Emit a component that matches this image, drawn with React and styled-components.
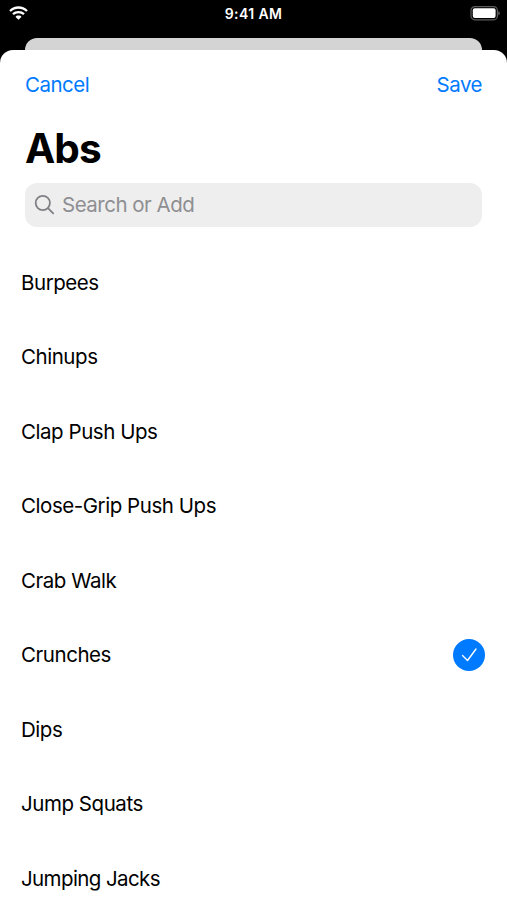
import React from "react";
import styled, { createGlobalStyle } from "styled-components";

const GlobalStyle = createGlobalStyle`
    * {
        box-sizing: border-box;
    }

    body {
        margin: 0;
        background: #000;
        font-family: Inter, "Liberation Sans", sans-serif;
        overflow: hidden;
    }
`;

const Screen = styled.div`
    width: 507px;
    height: 900px;
    display: flex;
    flex-direction: column;
    background: #000;
    overflow: hidden;
`;

const StatusBar = styled.header`
    height: 38px;
    flex-shrink: 0;
    display: grid;
    grid-template-columns: 1fr auto 1fr;
    align-items: start;
    padding: 6px 7px 0 9px;
    color: #fff;
`;

const Time = styled.span`
    margin-left: -2px;
    font-size: 14px;
    font-weight: 600;
    line-height: 16px;
    letter-spacing: 0.4px;
`;

const Battery = styled.svg`
    justify-self: end;
`;

const BackCard = styled.div`
    height: 12px;
    flex-shrink: 0;
    margin: 0 25px;
    border-radius: 12px 12px 0 0;
    background: #d4d4d5;
`;

const Sheet = styled.main`
    flex: 1;
    min-height: 0;
    border-radius: 13px 13px 0 0;
    background: #fff;
    overflow: hidden;
`;

const NavBar = styled.nav`
    height: 70px;
    display: flex;
    align-items: center;
    justify-content: space-between;
    padding: 0 25px;
`;

const NavButton = styled.button`
    border: 0;
    padding: 0;
    background: none;
    color: #007aff;
    font-family: inherit;
    font-size: 20.5px;
    line-height: 24px;
    letter-spacing: -0.5px;
`;

const Title = styled.h1`
    margin: 5px 25px 0;
    height: 48px;
    font-size: 40.5px;
    font-weight: 700;
    line-height: 48px;
    letter-spacing: -0.9px;
`;

const SearchBar = styled.div`
    height: 44px;
    margin: 10px 25px 0;
    padding: 0 9px;
    display: flex;
    align-items: center;
    gap: 7px;
    border-radius: 12px;
    background: #eee;
    color: #8e8e92;
    font-size: 20.5px;
    line-height: 24px;
    letter-spacing: -0.5px;
`;

const List = styled.ul`
    list-style: none;
    margin: 18px 0 0;
    padding: 0 22px 0 21px;
`;

const Row = styled.li`
    height: 74.5px;
    display: flex;
    align-items: center;
    justify-content: space-between;
    font-size: 20.5px;
    line-height: 24px;
    letter-spacing: ${({ $tracking }) => $tracking || -0.45}px;
    color: #000;
`;

const Name = styled.span`
    padding-top: 1px;
`;

const Check = styled.span`
    width: 32px;
    height: 32px;
    display: flex;
    align-items: center;
    justify-content: center;
    border-radius: 50%;
    background: #007aff;
`;

const exercises = [
    { name: "Burpees" },
    { name: "Chinups" },
    { name: "Clap Push Ups" },
    { name: "Close-Grip Push Ups" },
    { name: "Crab Walk" },
    { name: "Crunches", selected: true },
    { name: "Dips" },
    { name: "Jump Squats" },
    { name: "Jumping Jacks", tracking: -0.6 },
];

const App = () => {
    return (
        <>
            <GlobalStyle />
            <Screen>
                <StatusBar>
                    <svg width="19" height="14" viewBox="0 0 19 14" fill="none" stroke="#fff" strokeWidth="2.3">
                        <path d="M1 5C5.8.3 13.2.3 18 5" />
                        <path d="M4 8.2C7 5.3 12 5.3 15 8.2" />
                        <path d="M9.5 13.8 6.6 10.9C7 9 12 9 12.4 10.9Z" fill="#fff" stroke="none" />
                    </svg>
                    <Time>9:41 AM</Time>
                    <Battery width="30" height="15" viewBox="0 0 30 15">
                        <rect x="1" y=".6" width="26.4" height="13.2" rx="3.8" fill="none" stroke="#5c5c5c" strokeWidth="1.2" />
                        <rect x="2.8" y="2.3" width="22.8" height="9.8" rx="2" fill="#fff" />
                        <path d="M28.4 5c1.8.8 1.8 3.6 0 4.4Z" fill="#6a6a6a" />
                    </Battery>
                </StatusBar>
                <BackCard />
                <Sheet>
                    <NavBar>
                        <NavButton>Cancel</NavButton>
                        <NavButton>Save</NavButton>
                    </NavBar>
                    <Title>Abs</Title>
                    <SearchBar>
                        <svg width="21" height="21" viewBox="0 0 21 21" fill="none" stroke="#808085" strokeWidth="1.8" strokeLinecap="round">
                            <circle cx="8.8" cy="8" r="7.1" />
                            <path d="m14 13.2 5.2 5.2" />
                        </svg>
                        <span>Search or Add</span>
                    </SearchBar>
                    <List>
                        {exercises.map(({ name, selected, tracking }) => (
                            <Row key={name} $tracking={tracking}>
                                <Name>{name}</Name>
                                {selected && (
                                    <Check>
                                        <svg width="16" height="16" viewBox="0 0 16 16" fill="none" stroke="#fff" strokeWidth="1.4" strokeLinecap="round" strokeLinejoin="round">
                                            <path d="M1.5 8.5 6.5 13.5 15 2" />
                                        </svg>
                                    </Check>
                                )}
                            </Row>
                        ))}
                    </List>
                </Sheet>
            </Screen>
        </>
    );
};

export default App;
